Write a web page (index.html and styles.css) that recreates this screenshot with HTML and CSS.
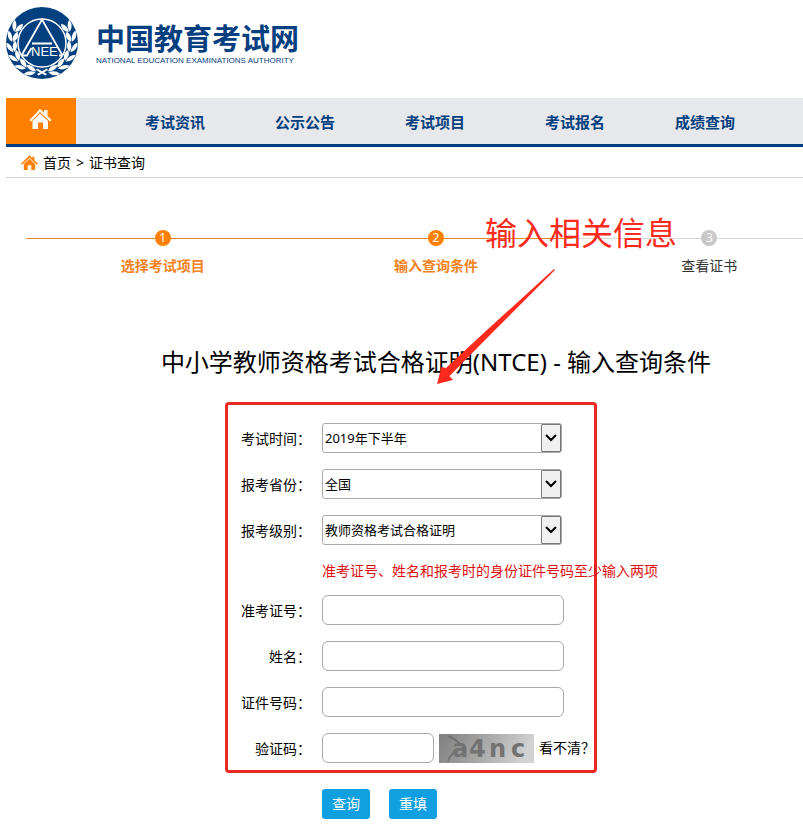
FILE: index.html
```html
<!DOCTYPE html>
<html lang="zh-CN">
<head>
<meta charset="utf-8">
<title>证书查询 - 中国教育考试网</title>
<link rel="stylesheet" href="styles.css">
</head>
<body>
<div class="page">
  <header class="brand">
    <svg class="emblem" viewBox="0 0 72 72" aria-hidden="true">
      <defs>
        <g id="sprig">
          <path d="M38 65Q34 58.500 27 61.500Q31 67 38 65Z"/>
          <path d="M38 66Q34 72.500 27 70.500Q31 65 38 66Z"/>
        </g>
        <g id="branch">
          <use href="#sprig" transform="rotate(16 36 36)"/>
          <use href="#sprig" transform="rotate(36 36 36)"/>
          <use href="#sprig" transform="rotate(56 36 36)"/>
          <use href="#sprig" transform="rotate(76 36 36)"/>
          <use href="#sprig" transform="rotate(96 36 36)"/>
          <use href="#sprig" transform="rotate(116 36 36)"/>
          <path d="M39.500 68.500L30 63L31 61.500L41 67Z"/>
        </g>
      </defs>
      <circle cx="36" cy="36" r="36" fill="#04407f"/>
      <g fill="#fff">
        <use href="#branch"/>
        <use href="#branch" transform="translate(72 0) scale(-1 1)"/>
      </g>
      <circle cx="36" cy="36" r="24" fill="#04407f" stroke="#fff" stroke-width="1.500"/>
      <path d="M15.500 48.500L36 12.500L56.500 48.500M26 36.500H46M15.500 48.500H21L25.500 41M53 48.500H56.500" fill="none" stroke="#fff" stroke-width="1.800"/>
      <text x="25" y="49" class="emblem-text">NEE</text>
    </svg>
    <div class="brand-names">
      <div class="brand-cn">中国教育考试网</div>
      <div class="brand-en">NATIONAL EDUCATION EXAMINATIONS AUTHORITY</div>
    </div>
  </header>

  <nav class="nav">
    <a class="nav-home" href="#" aria-label="首页">
      <svg viewBox="0 0 24 22" width="24" height="22" fill="#fff" aria-hidden="true">
        <path d="M11 1L15 4.500V2H18.500V8L22.500 12L21 13.500L11 4L2 13.500L0.500 12Z"/>
        <path d="M11 5.500L19 13V21H14V14.500H9V21H3.500V13Z"/>
      </svg>
    </a>
    <div class="nav-group">
      <a href="#">考试资讯</a>
      <a href="#">公示公告</a>
      <a href="#">考试项目</a>
    </div>
    <div class="nav-group">
      <a href="#">考试报名</a>
      <a href="#">成绩查询</a>
    </div>
  </nav>

  <div class="crumbs">
    <svg viewBox="0 0 24 22" width="17" height="16" fill="#ff8206" aria-hidden="true">
      <path d="M12 0L16 4V2H19V7L24 12L22.500 13.500L12 3.500L1.500 13.500L0 12Z"/>
      <path d="M12 5L20 12.500V21H14.500V14H9.500V21H4V12.500Z"/>
    </svg>
    <a href="#">首页</a><span>&gt;</span><span>证书查询</span>
  </div>

  <main class="content">
    <ol class="steps">
      <li class="step done"><span class="dot">1</span><span class="step-name">选择考试项目</span></li>
      <li class="step done"><span class="dot">2</span><span class="step-name">输入查询条件</span></li>
      <li class="step"><span class="dot">3</span><span class="step-name">查看证书</span></li>
    </ol>
    <h1>中小学教师资格考试合格证明(NTCE) - 输入查询条件</h1>

    <form class="query">
      <div class="fields">
        <label for="time">考试时间：</label>
        <div class="select">
          <select id="time"><option>2019年下半年</option></select>
          <span class="arrow"><svg viewBox="0 0 12 8" width="12" height="8"><path d="M1 1L6 6L11 1"/></svg></span>
        </div>
        <label for="province">报考省份：</label>
        <div class="select">
          <select id="province"><option>全国</option></select>
          <span class="arrow"><svg viewBox="0 0 12 8" width="12" height="8"><path d="M1 1L6 6L11 1"/></svg></span>
        </div>
        <label for="level">报考级别：</label>
        <div class="select">
          <select id="level"><option>教师资格考试合格证明</option></select>
          <span class="arrow"><svg viewBox="0 0 12 8" width="12" height="8"><path d="M1 1L6 6L11 1"/></svg></span>
        </div>
        <p class="hint">准考证号、姓名和报考时的身份证件号码至少输入两项</p>
        <label for="ticket">准考证号：</label>
        <input id="ticket" type="text">
        <label for="name">姓名：</label>
        <input id="name" type="text">
        <label for="idno">证件号码：</label>
        <input id="idno" type="text">
        <label for="code">验证码：</label>
        <div class="captcha">
          <input id="code" type="text">
          <svg viewBox="0 0 95 29" width="95" height="29" role="img" aria-label="验证码">
            <defs>
              <linearGradient id="shade" x1="0" y1="0" x2="1" y2="0.150">
                <stop offset="0" stop-color="#7f7f7f"/>
                <stop offset="0.500" stop-color="#a6a6a6"/>
                <stop offset="1" stop-color="#d2d2d2"/>
              </linearGradient>
            </defs>
            <rect width="95" height="29" fill="url(#shade)"/>
            <path d="M9 2Q17 5 22 11M9 27Q12 19 20 15" fill="none" stroke="#6c6c6c" stroke-width="1.500"/>
            <text y="23" class="captcha-text"><tspan x="13">a</tspan><tspan x="30">4</tspan><tspan x="50">n</tspan><tspan x="72">c</tspan></text>
          </svg>
          <a href="#">看不清？</a>
        </div>
      </div>
      <div class="actions">
        <button type="submit">查询</button>
        <button type="reset">重填</button>
      </div>
    </form>

    <div class="note">输入相关信息</div>
    <svg class="pointer" viewBox="0 0 120 116" width="120" height="116" aria-hidden="true">
      <path d="M117 0L50 61L9 99L4.500 98L0 115L16 111L12.500 107L58 61L118 1Z" fill="#fb2a1c"/>
    </svg>
  </main>
</div>
</body>
</html>
```
FILE: styles.css
```css
* { box-sizing: border-box; }

body {
  margin: 0;
  overflow-x: hidden;
  background: #fff;
  color: #000;
  font: 14px/20px "Noto Sans", "Noto Sans CJK SC", sans-serif;
}

a { color: inherit; text-decoration: none; }

/* The sheet runs past the right edge of narrow windows */
.page { margin: 0 -63px 0 6px; }

.brand { display: flex; gap: 18px; height: 98px; padding-top: 7px; color: #04407f; }
.emblem { width: 72px; height: 72px; }
.emblem-text { font: 13px "Liberation Sans", sans-serif; fill: #fff; }
.brand-names { padding-top: 12px; }
.brand-cn { font: bold 29px/36px "Noto Sans CJK SC", sans-serif; }
.brand-en { font: 8px/12px "Liberation Sans", sans-serif; white-space: nowrap; }

.nav {
  display: flex;
  gap: 10px;
  height: 49px;
  background: #e6e8ec;
  border-bottom: 3px solid #04407f;
}
.nav-home {
  display: flex;
  align-items: center;
  justify-content: center;
  width: 70px;
  margin-right: 24px;
  padding-bottom: 4px;
  background: #ff8000;
}
.nav-group { display: flex; }
.nav-group a {
  width: 130px;
  text-align: center;
  font-size: 15px;
  font-weight: bold;
  line-height: 48px;
  color: #04407f;
}

.crumbs {
  display: flex;
  align-items: center;
  gap: 5px;
  height: 31px;
  padding: 2px 0 0 15px;
  border-bottom: 1px solid #d2d2d2;
}

.content { position: relative; padding: 50px 20px 14px; }

.steps { display: grid; grid-template-columns: repeat(3, 1fr); margin: 0; padding: 0; list-style: none; }
.step {
  display: flex;
  flex-direction: column;
  align-items: center;
  gap: 10px;
  padding-top: 2px;
  color: #333;
  background: linear-gradient(#d8d8d8, #d8d8d8) 0 10px / 100% 1px no-repeat;
}
.step.done {
  color: #f58220;
  font-weight: bold;
  background-image: linear-gradient(#e0862a, #e0862a);
}
.dot {
  width: 16px;
  height: 16px;
  border-radius: 50%;
  background: #c8c8c8;
  color: #fff;
  font-size: 12px;
  font-weight: normal;
  line-height: 16px;
  text-align: center;
}
.done .dot { background: #ff8000; }

h1 { margin: 68px 0 22px; font-size: 24px; font-weight: normal; line-height: 36px; text-align: center; }

.query { margin-left: 199px; }
.fields {
  display: grid;
  grid-template-columns: 70px 242px;
  gap: 16px 11px;
  align-items: center;
  width: 372px;
  padding: 18px 0 7px 13px;
  border: 3px solid #ea2a22;
  border-radius: 4px;
}
label { padding-top: 2px; text-align: right; white-space: nowrap; }
.hint { grid-column: 2; margin: 0; line-height: 20px; height: 18px; white-space: nowrap; color: #e01010; }

input, select {
  width: 100%;
  height: 30px;
  padding: 0 2px;
  border: 1px solid #a9a9a9;
  border-radius: 6px;
  background: #fff;
  color: #000;
  font: inherit;
}
.select { position: relative; width: 240px; }
select { display: block; appearance: none; border-radius: 3px; font-size: 13px; }
.arrow {
  position: absolute;
  top: 1px;
  right: 1px;
  display: flex;
  align-items: center;
  justify-content: center;
  width: 20px;
  height: 28px;
  border: 1px solid #777;
  border-radius: 1px;
  background: #f0f0f0;
  pointer-events: none;
}
.arrow path { fill: none; stroke: #000; stroke-width: 2; }

.captcha { display: flex; align-items: center; gap: 5px; white-space: nowrap; }
.captcha input { flex: none; width: 112px; }
.captcha svg { flex: none; }
.captcha-text { font: bold 24px "DejaVu Sans", sans-serif; fill: #727272; }

.actions { display: flex; gap: 19px; margin: 16px 0 0 97px; }
button {
  width: 48px;
  height: 30px;
  padding: 0;
  border: 0;
  border-radius: 3px;
  background: #109fe0;
  color: #fff;
  font: inherit;
}

.note {
  position: absolute;
  top: 32px;
  left: 479px;
  color: #fb2a1c;
  font-size: 32px;
  line-height: 46px;
  white-space: nowrap;
}
.pointer { position: absolute; top: 91px; left: 431px; }
```
